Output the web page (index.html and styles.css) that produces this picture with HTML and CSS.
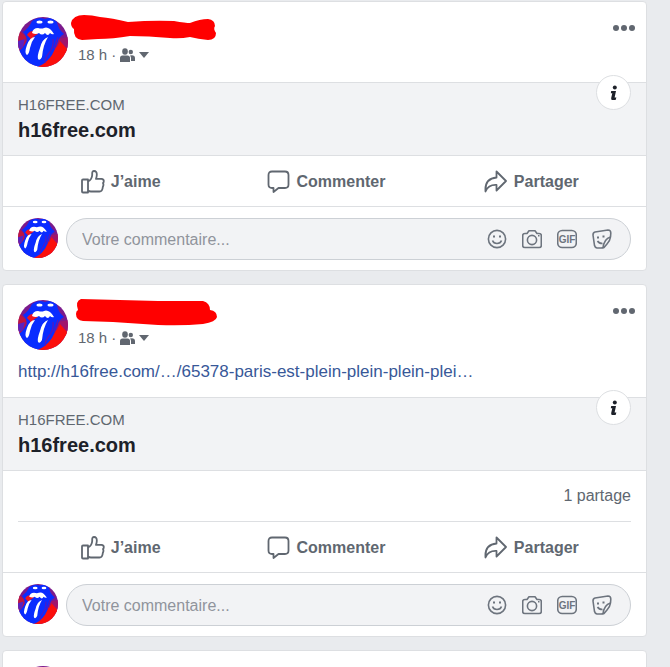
FILE: index.html
```html
<!DOCTYPE html>
<html lang="fr">
  <head>
    <title>Fil d’actualité</title>
    <meta charset="utf-8">
    <meta name="viewport" content="width=device-width, initial-scale=1">
    <link rel="stylesheet" href="styles.css">
  </head>
  <body>

  <!-- shared icons -->
  <svg class="sprite" aria-hidden="true">
    <defs>
      <clipPath id="round"><circle cx="25" cy="25" r="25"/></clipPath>
    </defs>
    <symbol id="avatar" viewBox="0 0 50 50">
      <g clip-path="url(#round)">
        <rect width="50" height="50" fill="#7b1a8c"/>
        <path d="M0 12L8 20L7 33L0 34Z" fill="#c01440"/>
        <path d="M0 24L7 22L5 30L0 33Z" fill="#5a22c0"/>
        <path d="M38 25L50 34V50H20Q32 43 38 25Z" fill="#fb0f0c"/>
        <path d="M40 22L50 20V34L38 30Z" fill="#a0146c"/>
        <path d="M42 24L50 33V36L37 34Z" fill="#fb0f0c"/>
        <path d="M5 15Q11 11 14 4Q20 -1 27 2Q34 -1 39 5Q40 12 46 17Q41 20 40 24Q38 31 34 38Q28 47 19 50H10L0 35Q6 30 9 24Q9 19 5 15Z" fill="#0a2cff"/>
        <path d="M9 18Q11 14 15 14L20 17Q15 19 13 24Q12 20 9 18Z" fill="#f01422"/>
        <path d="M14 16Q15 11 20 11Q24 12 26 11Q31 9 36 17Q34 18 32 16Q30 20 27 16Q24 19 21 16Q18 18 14 16Z" fill="#fff"/>
        <ellipse cx="21.500" cy="5" rx="3" ry="1.600" fill="#fff"/>
        <ellipse cx="32.500" cy="5" rx="3" ry="1.600" fill="#fff"/>
        <path d="M17 20Q12 20 9 28Q6 36 9 38Q11 37 12 31Q13 25 17 20Z" fill="#fff"/>
        <path d="M30 20Q24 22 22 31Q19 39 20 42Q22 44 24 40Q25 28 30 20Z" fill="#fff"/>
        <path d="M35 22Q36 30 31 36Q27 41 27 46M40 20Q38 25 36 32" fill="none" stroke="#5a18b8" stroke-width="1.200"/>
      </g>
    </symbol>
    <symbol id="friends" viewBox="0 0 15 14">
      <ellipse cx="5" cy="3.500" rx="2.800" ry="3.200"/>
      <path d="M0 14V10Q0 7.500 2.500 7.500H7.500Q10 7.500 10 10V14Z"/>
      <circle cx="10.800" cy="4" r="2.200"/>
      <path d="M10 7.500Q14.800 6.500 15 10V13H11V10Q11 8.500 10 7.500Z"/>
    </symbol>
    <symbol id="like" viewBox="0 0 24 24">
      <path d="M1 10.500Q1 9.500 2 9.500H7V22.500H2Q1 22.500 1 21.500Z"/>
      <path d="M7 11.500Q11 9.500 11.200 5V3Q11.200 1 13 1Q16 1 15.800 5Q15.700 7 15 8.800H20.500Q22.800 9 22.800 11Q22.800 12.500 22 13Q23 15 21.800 17Q21.500 21.500 18.500 21.500H10Q8 21.500 7 20.500"/>
    </symbol>
    <symbol id="comment" viewBox="0 0 24 24">
      <path d="M5 1.500H18Q21.500 1.500 21.500 5V14.500Q21.500 18 18 18H11.500L6.500 22V18H5Q1.500 18 1.500 14.500V5Q1.500 1.500 5 1.500Z"/>
    </symbol>
    <symbol id="share" viewBox="0 0 24 24">
      <path d="M12.500 1.500L22 11L12.500 20.500V15Q4.500 14.500 1.500 21.500Q0.500 8.500 12.500 7.500Z"/>
    </symbol>
    <symbol id="info" viewBox="0 0 8 16">
      <circle cx="4.800" cy="2.600" r="2"/>
      <path d="M1.200 6H6L4.600 12.600H6.400L5.600 15H2.200Q0.800 15 1.200 13L2.300 8.200H0.800Z"/>
    </symbol>
    <symbol id="smile" viewBox="0 0 20 20">
      <circle cx="10" cy="10" r="8.600"/>
      <path d="M5.500 11.500Q6.500 14.500 10 14.500Q13.500 14.500 14.500 11.500"/>
      <path class="dot" d="M6 6.500H8V8.500H6ZM12 6.500H14V8.500H12Z"/>
    </symbol>
    <symbol id="camera" viewBox="0 0 20 20">
      <path d="M3 4.500H5L7 1.800H13L15 4.500H17Q19.300 4.500 19.300 6.500V16.500Q19.300 18.500 17 18.500H3Q0.700 18.500 0.700 16.500V6.500Q0.700 4.500 3 4.500Z"/>
      <circle cx="10" cy="11" r="4.600"/>
      <path class="dot" d="M16 6H17.500V7.500H16Z"/>
    </symbol>
    <symbol id="sticker" viewBox="0 0 20 20">
      <path d="M3 3L16 1Q18.800 1 18.800 4L18.500 8Q18 12 15 15L12 18.500Q11 19 9 19L5 19Q3 18.500 2.500 16.500L1 6Q1 3.500 3 3Z"/>
      <path d="M18.500 8Q12 10 11 18.800M5.500 12Q7 14.500 10.500 14.500"/>
      <path class="dot" d="M5 7.500H7V9.500H5ZM10.500 6.500H12.500V8.500H10.500Z"/>
    </symbol>
  </svg>

  <main class="feed">

    <article class="post">
      <div class="post-top">
        <header class="post-header">
          <svg class="avatar"><use href="#avatar"/></svg>
          <div class="author">
            <svg class="redacted" viewBox="0 0 140 28" aria-hidden="true">
              <path d="M-7 6Q-5 -2 6 -2Q14 -2 22 0Q34 1 50 5Q75 3 96 4Q108 6 112 6Q122 2 130 2Q137 3 137 9Q135 12 138 16Q138 23 130 23Q120 22 112 20Q102 22 92 21Q70 19 52 19Q35 22 20 22L4 23Q-5 22 -4 12Q-7 10 -7 6Z"/>
            </svg>
            <div class="meta">
              <a href="#">18 h</a> <span>·</span>
              <button class="audience" aria-label="Amis"><svg><use href="#friends"/></svg><i class="caret"></i></button>
            </div>
          </div>
          <button class="more" aria-label="Plus"><i></i><i></i><i></i></button>
        </header>
      </div>
      <section class="preview">
        <div class="source">H16FREE.COM</div>
        <a class="title" href="#">h16free.com</a>
        <button class="info" aria-label="Informations"><svg><use href="#info"/></svg></button>
      </section>
      <div class="actions">
        <button><svg><use href="#like"/></svg>J’aime</button>
        <button><svg><use href="#comment"/></svg>Commenter</button>
        <button><svg><use href="#share"/></svg>Partager</button>
      </div>
      <form class="composer">
        <svg class="avatar small"><use href="#avatar"/></svg>
        <div class="field">
          <input type="text" placeholder="Votre commentaire..." aria-label="Votre commentaire">
          <button type="button" aria-label="Emoji"><svg><use href="#smile"/></svg></button>
          <button type="button" aria-label="Photo"><svg><use href="#camera"/></svg></button>
          <button type="button" aria-label="GIF"><svg viewBox="0 0 20 20"><rect x="0.700" y="1.500" width="18.600" height="17" rx="4.500"/><text x="10" y="14" text-anchor="middle">GIF</text></svg></button>
          <button type="button" aria-label="Autocollant"><svg><use href="#sticker"/></svg></button>
        </div>
      </form>
    </article>

    <article class="post">
      <div class="post-top">
        <header class="post-header">
          <svg class="avatar"><use href="#avatar"/></svg>
          <div class="author">
            <svg class="redacted" viewBox="0 0 140 28" aria-hidden="true">
              <path d="M3 -1L80 1L125 1Q132 3 132 10Q139 11 139 17Q138 22 125 24Q105 26 80 25L35 22L5 21Q-2 20 -2 14Q-2 11 0 10Q-3 1 3 -1Z"/>
            </svg>
            <div class="meta">
              <a href="#">18 h</a> <span>·</span>
              <button class="audience" aria-label="Amis"><svg><use href="#friends"/></svg><i class="caret"></i></button>
            </div>
          </div>
          <button class="more" aria-label="Plus"><i></i><i></i><i></i></button>
        </header>
        <p class="text"><a href="#">http://h16free.com/…/65378-paris-est-plein-plein-plein-plei…</a></p>
      </div>
      <section class="preview">
        <div class="source">H16FREE.COM</div>
        <a class="title" href="#">h16free.com</a>
        <button class="info" aria-label="Informations"><svg><use href="#info"/></svg></button>
      </section>
      <div class="stats"><a href="#">1 partage</a></div>
      <div class="actions">
        <button><svg><use href="#like"/></svg>J’aime</button>
        <button><svg><use href="#comment"/></svg>Commenter</button>
        <button><svg><use href="#share"/></svg>Partager</button>
      </div>
      <form class="composer">
        <svg class="avatar small"><use href="#avatar"/></svg>
        <div class="field">
          <input type="text" placeholder="Votre commentaire..." aria-label="Votre commentaire">
          <button type="button" aria-label="Emoji"><svg><use href="#smile"/></svg></button>
          <button type="button" aria-label="Photo"><svg><use href="#camera"/></svg></button>
          <button type="button" aria-label="GIF"><svg viewBox="0 0 20 20"><rect x="0.700" y="1.500" width="18.600" height="17" rx="4.500"/><text x="10" y="14" text-anchor="middle">GIF</text></svg></button>
          <button type="button" aria-label="Autocollant"><svg><use href="#sticker"/></svg></button>
        </div>
      </form>
    </article>

    <article class="post">
      <div class="post-top">
        <header class="post-header">
          <svg class="avatar"><use href="#avatar"/></svg>
        </header>
      </div>
    </article>

  </main>

  </body>
</html>
```

FILE: styles.css
```css
* {
  box-sizing: border-box;
}

body {
  margin: 0;
  height: 100vh;
  overflow: hidden;
  background: #e9ebee;
  color: #1d2129;
  font-family: "Liberation Sans", Arial, sans-serif;
  font-size: 16px;
}

a {
  color: inherit;
  text-decoration: none;
}
a:hover {
  text-decoration: underline;
}

button {
  border: 0;
  padding: 0;
  background: none;
  color: inherit;
  font: inherit;
  cursor: pointer;
}

svg {
  display: block;
  flex: none;
}

.sprite {
  position: absolute;
  width: 0;
  height: 0;
}

.feed {
  display: flex;
  flex-direction: column;
  gap: 13px;
  padding: 1px 23px 0 2px;
}

.post {
  background: #fff;
  border: 1px solid #dddfe2;
  border-radius: 4px;
}

.post-top {
  padding: 15px;
}

.post-header {
  display: flex;
  align-items: flex-start;
}

.avatar {
  width: 50px;
  height: 50px;
}
.avatar.small {
  width: 40px;
  height: 40px;
}

.author {
  flex: 1;
  margin-left: 10px;
}

.redacted {
  width: 140px;
  height: 28px;
  overflow: visible;
  fill: #f00;
}

.meta {
  display: flex;
  align-items: center;
  gap: 4px;
  color: #616770;
  font-size: 15px;
  line-height: 20px;
}

.audience {
  display: flex;
  align-items: center;
  gap: 4px;
}
.audience svg {
  width: 15px;
  height: 14px;
  fill: #616770;
}

.caret {
  border: 5px solid transparent;
  border-top: 6px solid #616770;
  border-bottom: 0;
}

.more {
  display: flex;
  gap: 2px;
  padding: 8px 0;
  margin-right: -4px;
}
.more i {
  width: 6px;
  height: 6px;
  border-radius: 50%;
  background: #616770;
}

.text {
  margin: 12px 0 0;
  color: #385898;
  font-size: 17px;
  line-height: 20px;
}

/* link preview */
.preview {
  position: relative;
  padding: 12px 15px 13px;
  background: #f2f3f5;
  border-top: 1px solid #dddfe2;
  border-bottom: 1px solid #dddfe2;
}

.source {
  color: #606770;
  font-size: 15px;
  line-height: 20px;
}

.title {
  display: block;
  margin-top: 3px;
  font-size: 20px;
  font-weight: bold;
  line-height: 24px;
}

.info {
  position: absolute;
  top: -8px;
  right: 15px;
  display: flex;
  align-items: center;
  justify-content: center;
  width: 35px;
  height: 35px;
  background: #fff;
  border: 1px solid #dddfe2;
  border-radius: 50%;
}
.info svg {
  width: 8px;
  height: 16px;
  fill: #1d2129;
}

.stats {
  margin: 0 15px;
  border-bottom: 1px solid #dddfe2;
  color: #606770;
  line-height: 50px;
  text-align: right;
}

.actions {
  display: flex;
  padding: 0 12px 0 15px;
  border-bottom: 1px solid #dddfe2;
}
.actions button {
  display: flex;
  flex: 1;
  align-items: center;
  justify-content: center;
  gap: 6px;
  height: 51px;
  margin-bottom: -1px;
  color: #606770;
  font-weight: bold;
}
.actions svg {
  width: 24px;
  height: 24px;
  fill: none;
  stroke: #606770;
  stroke-width: 1.8;
  stroke-linejoin: round;
}

/* comment box */
.composer {
  display: flex;
  gap: 8px;
  padding: 11px 15px 10px;
}

.field {
  display: flex;
  flex: 1;
  align-items: center;
  gap: 15px;
  height: 42px;
  padding: 0 18px 0 15px;
  background: #f2f3f5;
  border: 1px solid #ccd0d5;
  border-radius: 21px;
}
.field input {
  flex: 1;
  min-width: 0;
  padding: 1px 0 0;
  border: 0;
  outline: 0;
  background: none;
  font: inherit;
}
.field input::placeholder {
  color: #90949c;
}
.field svg {
  width: 20px;
  height: 20px;
  fill: none;
  stroke: #6d747e;
  stroke-width: 1.6;
  stroke-linejoin: round;
}
.field .dot,
.dot {
  fill: #6d747e;
  stroke: none;
}
.field text {
  fill: #6d747e;
  stroke: none;
  font-size: 10px;
  font-weight: bold;
}
```
